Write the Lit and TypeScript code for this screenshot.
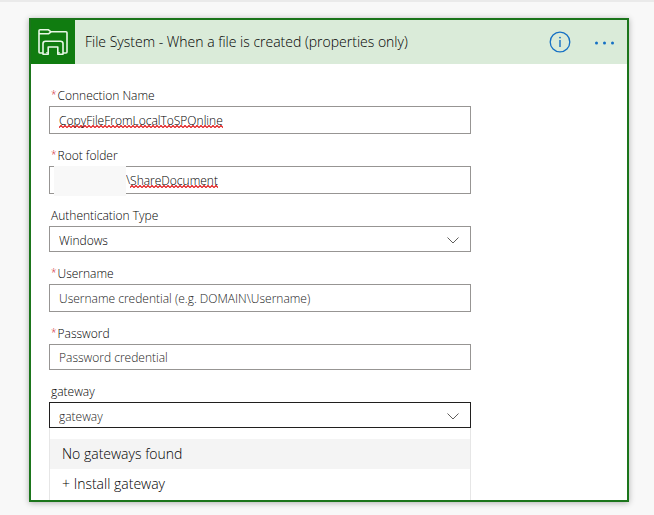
import { LitElement, html, css, svg, nothing } from "lit";
import { customElement } from "lit/decorators.js";

const chevron = html`<svg class="chevron" viewBox="0 0 12 7" aria-hidden="true">
  <path d="M0.5 0.5 6 6 11.5 0.5" fill="none" stroke="currentColor" />
</svg>`;

const folderIcon = html`<svg class="folder" viewBox="0 0 32 28" aria-hidden="true">
  <g fill="none" stroke="#e8f8e6" stroke-width="1.6" stroke-linejoin="round">
    <path d="M6 25H3Q2 25 2 24V2.8Q2 1.8 3 1.8H11.5L14 3.8H29Q30 3.8 30 4.8V24Q30 25 29 25H26" />
    <path d="M2 5.8H11.5L14 3.8" />
    <path d="M6 26.2V15.5Q6 13.2 8.5 13.2H23.5Q26 13.2 26 15.5V26.2H20.8V19H11.2V26.2Z" />
    <path d="M11.2 24.8H9M20.8 24.8H23" stroke-width="1" />
  </g>
</svg>`;

@customElement("app-root")
export class AppRoot extends LitElement {
  static styles = css`
    :host {
      display: block;
      min-height: 100vh;
      box-sizing: border-box;
      padding: 16px 25px 13px 29px;
      border-top: 2px solid #eaeaea;
      background: #f8f8f8;
      color: #000;
      font: 300 12px/20px "Open Sans", "Noto Sans", sans-serif;
    }
    .card {
      border: 2px solid #1b751b;
      background: #fff;
      box-shadow: 0 1px 6px rgba(0, 0, 0, 0.3);
    }
    header {
      display: flex;
      align-items: center;
      height: 44px;
      background: #daebd9;
    }
    .logo {
      display: grid;
      place-items: center;
      width: 44px;
      height: 44px;
      background: #107c10;
    }
    .folder {
      width: 32px;
      height: 28px;
    }
    h1 {
      flex: 1;
      margin: 0 0 0 10px;
      font-size: 14px;
      font-weight: 300;
    }
    .action {
      display: grid;
      padding: 0;
      border: 0;
      background: none;
      color: #1570c4;
    }
    .info {
      margin-right: 23px;
    }
    .more {
      margin-right: 12px;
    }
    form {
      display: grid;
      gap: 12px;
      padding: 22px 156px 0 18px;
    }
    label {
      display: flex;
      padding-left: 2px;
      gap: 1px;
    }
    .star {
      color: #d0202e;
      font-size: 10px;
      line-height: 16px;
    }
    .box {
      position: relative;
      display: flex;
      align-items: center;
      box-sizing: border-box;
      height: 28px;
      padding: 0 9px;
      border: 1px solid #979593;
      background: #fff;
    }
    .short {
      height: 26px;
    }
    .open {
      border-color: #201f1e;
    }
    input,
    select {
      flex: 1;
      min-width: 0;
      height: 100%;
      margin: 0;
      padding: 0;
      border: 0;
      outline: 0;
      background: none;
      color: inherit;
      font: inherit;
      appearance: none;
    }
    select {
      padding-top: 3px;
    }
    ::placeholder,
    .open select {
      color: #222;
      opacity: 1;
    }
    .flagged {
      flex: none;
      field-sizing: content;
      background: url("data:image/svg+xml,%3Csvg xmlns='http://www.w3.org/2000/svg' width='4' height='3'%3E%3Cpath d='M-1 3.5 2 .5 5 3.5' fill='none' stroke='%23e01818' stroke-width='1.2'/%3E%3C/svg%3E")
        0 18px repeat-x;
    }
    .masked {
      padding-left: 76px;
    }
    .mask {
      position: absolute;
      top: -1px;
      left: 4px;
      width: 72px;
      height: 30px;
      background: #f8f8f8;
    }
    .chevron {
      position: absolute;
      right: 11px;
      width: 12px;
      height: 7px;
      margin-top: 3px;
      color: #605e5c;
      pointer-events: none;
    }
    .menu {
      margin: 0;
      padding: 11px 0 1px;
      border: solid #e6e6e6;
      border-width: 0 1px;
      list-style: none;
    }
    .item {
      display: block;
      width: 100%;
      height: 30px;
      padding: 0 12px;
      border: 0;
      background: none;
      color: inherit;
      font: inherit;
      font-size: 14px;
      line-height: 30px;
      text-align: left;
    }
    .current {
      background: #f4f4f4;
    }
  `;

  private label(id: string, text: string, required = false) {
    return html`<label for=${id}>${required ? html`<span class="star">*</span>` : nothing}${text}</label>`;
  }

  render() {
    return html`
      <section class="card">
        <header>
          <span class="logo">${folderIcon}</span>
          <h1>File System - When a file is created (properties only)</h1>
          <button class="action info" aria-label="Information">
            <svg width="22" height="22" viewBox="0 0 22 22" aria-hidden="true">
              <circle cx="11" cy="11" r="9.8" fill="none" stroke="currentColor" stroke-width="1.3" />
              <path d="M11 9V16" stroke="currentColor" stroke-width="1.4" />
              <circle cx="11" cy="6.6" r="0.9" fill="currentColor" />
            </svg>
          </button>
          <button class="action more" aria-label="More options">
            <svg width="21" height="22" viewBox="0 0 21 22" aria-hidden="true">
              ${[2.5, 10.5, 18.5].map((x) => svg`<circle cx=${x} cy="12" r="1.5" fill="currentColor" />`)}
            </svg>
          </button>
        </header>
        <form>
          <div>
            ${this.label("name", "Connection Name", true)}
            <div class="box">
              <input id="name" class="flagged" spellcheck="false" .value=${"CopyFileFromLocalToSPOnline"} />
            </div>
          </div>
          <div>
            ${this.label("root", "Root folder", true)}
            <div class="box masked">
              <span class="mask"></span><span>\\</span>
              <input id="root" class="flagged" spellcheck="false" .value=${"ShareDocument"} />
            </div>
          </div>
          <div>
            ${this.label("auth", "Authentication Type")}
            <div class="box short">
              <select id="auth"><option>Windows</option></select>${chevron}
            </div>
          </div>
          <div>
            ${this.label("user", "Username", true)}
            <div class="box">
              <input id="user" placeholder="Username credential (e.g. DOMAIN\\Username)" />
            </div>
          </div>
          <div>
            ${this.label("password", "Password", true)}
            <div class="box short">
              <input id="password" type="password" placeholder="Password credential" />
            </div>
          </div>
          <div>
            ${this.label("gateway", "gateway")}
            <div class="box short open">
              <select id="gateway"><option>gateway</option></select>${chevron}
            </div>
            <ul class="menu">
              <li><button type="button" class="item current">No gateways found</button></li>
              <li><button type="button" class="item">+ Install gateway</button></li>
            </ul>
          </div>
        </form>
      </section>
    `;
  }
}
